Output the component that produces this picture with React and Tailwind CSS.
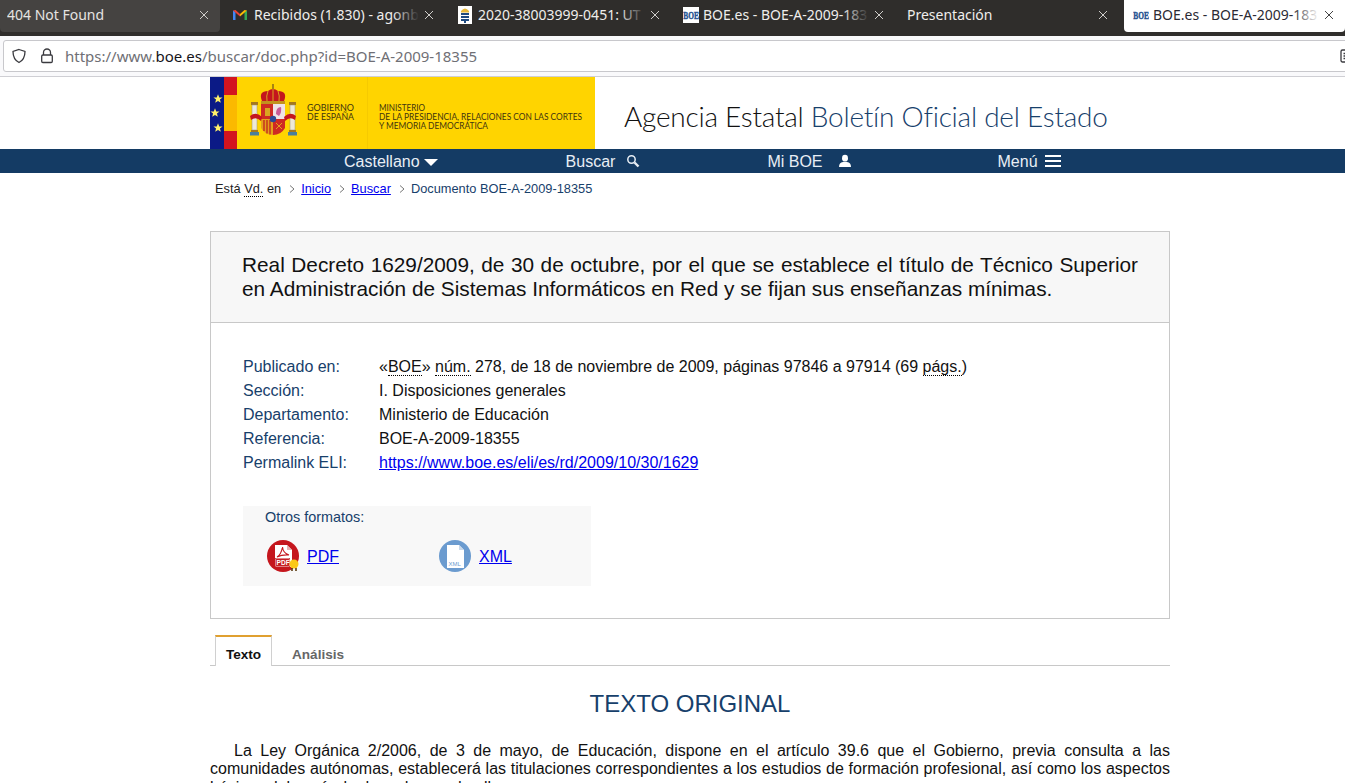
const tabs = [
  { title: '404 Not Found', w: 'w-[220px]', gap: 'mr-[5px]', hover: true },
  { title: 'Recibidos (1.830) - agonb', w: 'w-[220px]', gap: 'mr-[5px]', icon: 'gmail', iconW: 'w-[22px]' },
  { title: '2020-38003999-0451: UT', w: 'w-[221px]', gap: 'mr-[5px]', icon: 'crest', iconW: 'w-[21px]' },
  { title: 'BOE.es - BOE-A-2009-183', w: 'w-[219px]', gap: 'mr-[5px]', icon: 'boe', iconW: 'w-[20px]' },
  { title: 'Presentación', w: 'w-[219px]', gap: 'mr-[5px]' },
  { title: 'BOE.es - BOE-A-2009-183', w: 'w-[221px]', icon: 'boe', iconW: 'w-[20px]', active: true },
];

const BoeFavicon = () => (
  <svg width="16" height="16" viewBox="0 0 16 16">
    <rect width="16" height="16" fill="#fff" />
    <text transform="scale(1 1.5)" x="0.2" y="7.8" fontSize="7.4" fontWeight="bold" fill="#24508f" stroke="#24508f" strokeWidth=".3" fontFamily="'Liberation Serif', serif">BOE</text>
  </svg>
);

const GmailIcon = () => (
  <svg width="16" height="16" viewBox="0 0 16 16">
    <path d="M1 3.5 L3.5 5 V13 H1.5 A.5 .5 0 0 1 1 12.5 Z" fill="#4285f4" />
    <path d="M15 3.5 L12.5 5 V13 H14.5 A.5 .5 0 0 0 15 12.5 Z" fill="#34a853" />
    <path d="M1 3.5 L3.5 3 L8 7 L8 9.5 Z" fill="#ea4335" />
    <path d="M15 3.5 L12.5 3 L8 7 L8 9.5 Z" fill="#fbbc04" />
  </svg>
);

const CrestIcon = () => (
  <svg width="16" height="18" viewBox="0 0 16 18">
    <rect x="1" y="0" width="14" height="18" fill="#fff" />
    <path d="M4 5 Q8 0 12 5 L12 6.5 L4 6.5 Z" fill="#e8b93a" />
    <rect x="4" y="7" width="8" height="8" fill="#1f4a80" />
    <rect x="4" y="9" width="8" height="1" fill="#fff" />
    <rect x="4" y="12" width="8" height="1" fill="#fff" />
    <rect x="7" y="15" width="2" height="2" fill="#1f4a80" />
  </svg>
);

const TabIcon = ({ type }) => {
  if (type === 'gmail') return <GmailIcon />;
  if (type === 'crest') return <CrestIcon />;
  if (type === 'boe') return <BoeFavicon />;
  return null;
};

const Tab = ({ tab }) => (
  <div
    className={`${tab.w} ${tab.gap || ''} h-8 pb-[3px] flex items-center pr-[11px] rounded-b-[4px] shrink-0 ${
      tab.active ? 'pl-[9px] bg-white text-[#2b2a33]' : tab.hover ? 'pl-[7px] bg-[#454341] text-[#e6e4e1]' : 'pl-[7px] text-[#efeeec]'
    }`}
  >
    {tab.icon && (
      <span className={`${tab.iconW} shrink-0 flex items-center`}>
        <TabIcon type={tab.icon} />
      </span>
    )}
    <span className="flex-1 overflow-hidden whitespace-nowrap text-[14px] font-['Noto_Sans',sans-serif] relative">
      {tab.title}
      {tab.icon && (
        <span
          className={`absolute right-0 top-0 bottom-0 w-[26px] bg-gradient-to-r from-transparent ${
            tab.active ? 'to-white' : 'to-[#2f2d2b]'
          }`}
        />
      )}
    </span>
    <svg width="10" height="10" viewBox="0 0 10 10" className="ml-[5px] shrink-0">
      <path d="M1 1 L9 9 M9 1 L1 9" stroke={tab.active ? '#444' : '#cfcdca'} strokeWidth="1" />
    </svg>
  </div>
);

const Star = ({ x, y }) => (
  <path
    transform={`translate(${x} ${y}) scale(0.48)`}
    d="M0 -10 L2.6 -3.2 L9.5 -3.1 L4 1.2 L5.9 8 L0 4 L-5.9 8 L-4 1.2 L-9.5 -3.1 L-2.6 -3.2 Z"
    fill="#fff06a"
  />
);

const Pillar = ({ x }) => (
  <g>
    <rect x={x - 1} y="25" width="7" height="3" fill="#a5781e" />
    <rect x={x} y="28" width="5" height="25" fill="#eee9d6" stroke="#9a9070" strokeWidth=".5" />
    <rect x={x - 1} y="53" width="7" height="2" fill="#a5781e" />
    <rect x={x - 2} y="55" width="9" height="3.5" fill="#4b7f9c" />
  </g>
);

const GovLogo = () => (
  <svg width="385" height="72" viewBox="0 0 385 72" className="block">
    <rect width="385" height="72" fill="#ffd400" />
    <rect width="14" height="72" fill="#0b1a86" />
    <rect x="14" width="13" height="72" fill="#fbb900" />
    <rect x="14" width="13" height="18" fill="#d3141f" />
    <rect x="14" y="54" width="13" height="18" fill="#d3141f" />
    <Star x={8} y={22} />
    <Star x={5} y={36} />
    <Star x={8} y={51} />
    {/* crest */}
    <Pillar x={42} />
    <Pillar x={80} />
    <path d="M63 7 V13" stroke="#8a6a18" strokeWidth="1.5" />
    <path d="M52 24 Q48 14 58 14 Q63 10 68 14 Q78 14 74 24 Z" fill="#c4161d" />
    <path d="M58 14 Q56 19 57 24 M63 12 V24 M68 14 Q70 19 69 24" stroke="#d9a520" strokeWidth="1" fill="none" />
    <rect x="51" y="24" width="24" height="3" fill="#c2921c" />
    <rect x="51" y="27" width="12" height="15" fill="#cf2a23" />
    <rect x="63" y="27" width="12" height="15" fill="#efe3e6" />
    <rect x="55" y="31" width="5" height="8" fill="#d9a520" />
    <path d="M66 37 Q66 30 71 30 Q72 35 69 39 Z" fill="#c85a96" />
    <path d="M51 42 H63 V58 Q55 58 51 51 Z" fill="#e4a11b" />
    <path d="M63 42 H75 V51 Q71 58 63 58 Z" fill="#cf2a23" />
    <path d="M54 43 V54 M57 43 V56.5 M60 43 V57.5" stroke="#c0261f" strokeWidth="1.3" />
    <path d="M66 46 L72 52 M72 46 L66 52" stroke="#e4a11b" strokeWidth="1" />
    <circle cx="63" cy="42" r="3.2" fill="#2c4a96" />
    <path d="M40 39 Q46 34 52 40 L51 44 Q46 39 41 43 Z M86 39 Q80 34 74 40 L75 44 Q80 39 85 43 Z" fill="#c4161d" />
    <g fontFamily="Lato, sans-serif" fill="#42340f" fontSize="9">
      <text x="97" y="34" textLength="47" lengthAdjust="spacingAndGlyphs">GOBIERNO</text>
      <text x="97" y="43" textLength="47" lengthAdjust="spacingAndGlyphs">DE ESPAÑA</text>
    </g>
    <rect x="157" width="1" height="72" fill="#f6ca00" />
    <g fontFamily="Lato, sans-serif" fill="#42340f" fontSize="9">
      <text x="169" y="34" textLength="46" lengthAdjust="spacingAndGlyphs">MINISTERIO</text>
      <text x="169" y="43" textLength="203" lengthAdjust="spacingAndGlyphs">DE LA PRESIDENCIA, RELACIONES CON LAS CORTES</text>
      <text x="169" y="52" textLength="109" lengthAdjust="spacingAndGlyphs">Y MEMORIA DEMOCRÁTICA</text>
    </g>
  </svg>
);

const Search = () => (
  <svg width="14" height="14" viewBox="0 0 14 14" fill="none" stroke="#e8eef5">
    <circle cx="5.5" cy="5.5" r="3.7" strokeWidth="1.5" />
    <path d="M8.5 8.5 L12.5 12.5" strokeWidth="2.4" />
  </svg>
);

const User = () => (
  <svg width="14" height="14" viewBox="0 0 14 14" fill="#fff">
    <ellipse cx="7" cy="4.2" rx="3" ry="3.4" />
    <path d="M1 13 Q1 8.5 5 8 H9 Q13 8.5 13 13 Z" />
  </svg>
);

const Burger = () => (
  <div className="w-4 flex flex-col gap-[3px]">
    <div className="h-0.5 bg-white" />
    <div className="h-0.5 bg-white" />
    <div className="h-0.5 bg-white" />
  </div>
);

const Abbr = ({ children }) => (
  <span className="border-b border-dotted border-black">{children}</span>
);

const Chevron = () => (
  <svg width="6" height="8" viewBox="0 0 6 8" className="ml-[8px] mr-[6px] mt-[1px]" fill="none">
    <path d="M1 .5 L5 4 L1 7.5" stroke="#777" />
  </svg>
);

const metadata = [
  {
    label: 'Publicado en:',
    value: (
      <>
        «<Abbr>BOE</Abbr>» <Abbr>núm.</Abbr> 278, de 18 de noviembre de 2009, páginas 97846 a 97914 (69 <Abbr>págs.</Abbr>)
      </>
    ),
  },
  { label: 'Sección:', value: 'I. Disposiciones generales' },
  { label: 'Departamento:', value: 'Ministerio de Educación' },
  { label: 'Referencia:', value: 'BOE-A-2009-18355' },
  {
    label: 'Permalink ELI:',
    value: <a href="#" className="text-[#0000ee] underline">https://www.boe.es/eli/es/rd/2009/10/30/1629</a>,
  },
];

const PdfIcon = () => (
  <svg width="34" height="34" viewBox="0 0 34 34">
    <circle cx="16" cy="16" r="16" fill="#c5161d" />
    <path d="M8 5 H20 L25 10 V27 H8 Z" fill="#fff" />
    <path d="M20 5 V10 H25 Z" fill="#e6b3b3" />
    <path d="M10 17 Q14 15 15.5 7 Q16 13 22 15 Q15 14.5 10 17 Z" fill="none" stroke="#c5161d" strokeWidth="1.1" />
    <rect x="8" y="18" width="15" height="9" fill="#c5161d" />
    <rect x="8.8" y="18.8" width="13.4" height="7.4" fill="none" stroke="#fff" strokeWidth=".5" />
    <text x="9.5" y="25.2" fontSize="6.6" fontWeight="bold" fill="#fff" fontFamily="'Liberation Sans', sans-serif">PDF</text>
    <circle cx="27" cy="24" r="4.5" fill="#fbc818" />
    <path d="M25 28 V31 M29 28 V31" stroke="#5a3a10" strokeWidth="1.6" />
  </svg>
);

const XmlIcon = () => (
  <svg width="34" height="34" viewBox="0 0 34 34">
    <circle cx="16" cy="16" r="16" fill="#6b9bcf" />
    <path d="M8 5 H20 L25 10 V28 H8 Z" fill="#fff" />
    <path d="M20 5 V10 H25 Z" fill="#c8d8ea" />
    <text x="9.5" y="26" fontSize="6" fill="#6b9bcf" fontFamily="'Liberation Sans', sans-serif">XML</text>
  </svg>
);

export default function App() {
  return (
    <div className="w-[1345px] h-[783px] overflow-hidden bg-white font-['Liberation_Sans',sans-serif]">
      {/* browser tabs */}
      <div className="h-9 bg-[#2f2d2b] flex items-start overflow-hidden">
        {tabs.map((tab) => (
          <Tab key={tab.title + tab.w} tab={tab} />
        ))}
      </div>

      {/* url bar */}
      <div className="h-[41px] bg-[#f9f9fb] border-b border-[#cfcfd4] pt-1 pl-[3px] overflow-hidden">
        <div className="h-[32px] w-[1360px] bg-white border border-[#c8c8cc] rounded-[3px] flex items-center pl-[7px]">
          <svg width="16" height="16" viewBox="0 0 16 16" fill="none" stroke="#3a3a3f" strokeWidth="1.3">
            <path d="M8 1.5 L14 3.5 C14 9 12 12.5 8 14.5 C4 12.5 2 9 2 3.5 Z" />
          </svg>
          <svg width="16" height="16" viewBox="0 0 16 16" fill="none" stroke="#3a3a3f" strokeWidth="1.3" className="ml-3">
            <path d="M4.5 7 V4.5 A3.5 3.5 0 0 1 11.5 4.5 V7" />
            <rect x="2.7" y="7" width="10.6" height="7.5" rx="1.2" />
          </svg>
          <span className="ml-[10px] text-[15px] font-['Noto_Sans',sans-serif] text-[#6f6f75] whitespace-nowrap">
            https://www.<span className="text-[#15141a]">boe.es</span>/buscar/doc.php?id=BOE-A-2009-18355
          </span>
          <svg width="16" height="16" viewBox="0 0 16 16" fill="none" stroke="#3a3a3f" strokeWidth="1.3" className="ml-auto mr-[6px]">
            <rect x="1" y="2" width="14" height="12" rx="1.5" />
            <path d="M3.5 5.5 H8 M3.5 8 H8 M3.5 10.5 H8" />
          </svg>
        </div>
      </div>

      {/* site header */}
      <div className="w-[960px] ml-[210px] h-[72px] flex items-center">
        <GovLogo />
        <div className="ml-[29px] mt-[6px] text-[28px] leading-none tracking-[-0.25px] whitespace-nowrap font-['Lato',sans-serif] font-light text-[#111]">
          Agencia Estatal <span className="text-[#17406b]">Boletín Oficial del Estado</span>
        </div>
      </div>

      {/* nav */}
      <div className="h-6 bg-[#143b64] text-[#e8eef5] text-[16px]">
        <div className="w-[960px] ml-[210px] h-full flex items-center pl-[134px]">
          <div className="flex items-center gap-1">
            <span className="pt-[2px]">Castellano</span>
            <span className="w-0 h-0 border-x-[7px] border-x-transparent border-t-[7px] border-t-white mt-[2px]" />
          </div>
          <div className="flex items-center gap-[11px] ml-[128px]">
            <span className="pt-[2px]">Buscar</span>
            <Search />
          </div>
          <div className="flex items-center gap-[15px] ml-[127px]">
            <span className="pt-[2px]">Mi BOE</span>
            <User />
          </div>
          <div className="flex items-center gap-[7px] ml-[146px]">
            <span className="pt-[2px]">Menú</span>
            <Burger />
          </div>
        </div>
      </div>

      {/* breadcrumb */}
      <div className="ml-[215px] mt-[7px] flex items-center text-[12.8px] leading-[17px] text-[#222]">
        <span>
          Está <span className="border-b border-dotted border-black">Vd.</span> en
        </span>
        <Chevron />
        <a href="#" className="text-[#0000ee] underline">Inicio</a>
        <Chevron />
        <a href="#" className="text-[#0000ee] underline">Buscar</a>
        <Chevron />
        <span className="text-[#17406b]">Documento BOE-A-2009-18355</span>
      </div>

      <div className="w-[960px] ml-[210px] mt-[34px]">
        {/* document card */}
        <div className="h-[388px] border border-[#c8c8c8]">
          <div className="h-[91px] bg-[#f7f7f7] border-b border-[#c8c8c8] pl-[31px] pr-[31px] pt-[21px] text-[20.8px] leading-6 text-justify text-[#111]">
            Real Decreto 1629/2009, de 30 de octubre, por el que se establece el título de Técnico Superior en Administración de Sistemas Informáticos en Red y se fijan sus enseñanzas mínimas.
          </div>
          <dl className="mt-[32px] ml-[32px] text-[16px] leading-6">
            {metadata.map(({ label, value }) => (
              <div key={label} className="flex">
                <dt className="w-[136px] text-[#17406b]">{label}</dt>
                <dd className="text-[#111]">{value}</dd>
              </div>
            ))}
          </dl>
          <div className="mt-[31px] ml-[32px] w-[348px] h-[80px] bg-[#f8f8f8] pl-[23px] pt-[1px]">
            <div className="text-[14.4px] leading-5 text-[#17406b] -ml-px">Otros formatos:</div>
            <div className="flex mt-[13px] text-[16px] pl-px">
              <a href="#" className="w-[172px] flex items-center gap-[6px] text-[#0000ee]">
                <PdfIcon />
                <span className="underline">PDF</span>
              </a>
              <a href="#" className="flex items-center gap-[6px] text-[#0000ee]">
                <XmlIcon />
                <span className="underline">XML</span>
              </a>
            </div>
          </div>
        </div>

        {/* tabs */}
        <div className="mt-4 h-[31px] border-b border-[#c8c8c8] flex items-end pl-[5px] text-[13.6px] font-bold">
          <div className="h-[31px] w-[57px] -mb-px bg-white border-x border-b-0 border-x-[#d0d0d0] border-t-2 border-t-[#e0a030] flex items-center justify-center pt-[7px] text-[#111]">
            Texto
          </div>
          <div className="h-[31px] ml-[20px] flex items-center pt-[12px] text-[#666]">Análisis</div>
        </div>

        <h2 className="mt-6 text-center text-[24px] leading-7 font-normal text-[#17406b]">TEXTO ORIGINAL</h2>

        <p className="mt-[24px] text-[16px] leading-[18.4px] text-justify indent-6 text-[#111]">
          La Ley Orgánica 2/2006, de 3 de mayo, de Educación, dispone en el artículo 39.6 que el Gobierno, previa consulta a las comunidades autónomas, establecerá las titulaciones correspondientes a los estudios de formación profesional, así como los aspectos básicos del currículo de cada una de ellas.
        </p>
      </div>
    </div>
  );
}
